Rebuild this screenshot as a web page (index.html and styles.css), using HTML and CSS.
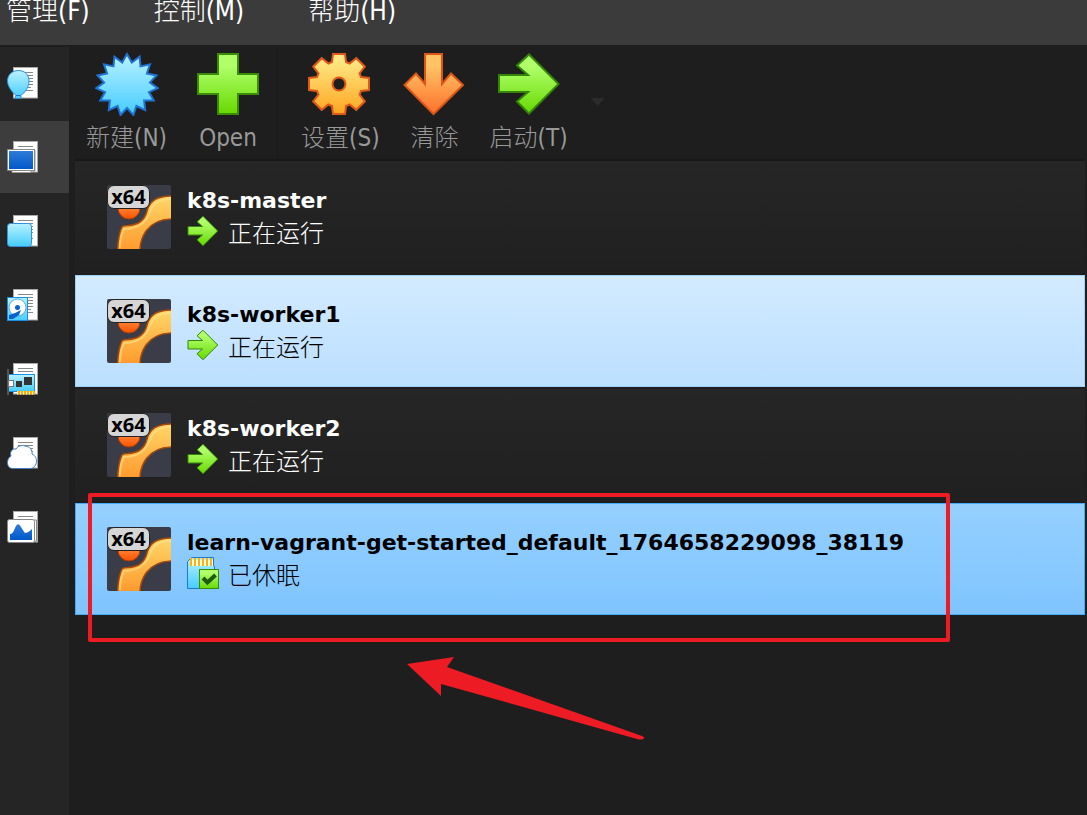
FILE: index.html
```html
<!DOCTYPE html>
<html lang="zh-CN">

<head>
  <meta charset="UTF-8">
  <meta name="viewport" content="width=device-width, initial-scale=1.0">
  <title>VirtualBox</title>
  <link rel="stylesheet" href="styles.css">
</head>

<body>
  <!-- shared icons -->
  <svg class="defs" width="0" height="0" aria-hidden="true">
    <defs>
      <linearGradient id="g-blue" x1="0" y1="0" x2="0" y2="1"><stop offset="0" stop-color="#b8f2ff"/><stop offset="1" stop-color="#46ccff"/></linearGradient>
      <linearGradient id="g-green" x1="0" y1="0" x2="0" y2="1"><stop offset="0.2" stop-color="#b0ff6a"/><stop offset="1" stop-color="#66d900"/></linearGradient>
      <linearGradient id="g-yellow" x1="0" y1="0" x2="0" y2="1"><stop offset="0.1" stop-color="#ffe885"/><stop offset="1" stop-color="#ffa51f"/></linearGradient>
      <linearGradient id="g-orange" x1="0" y1="0" x2="0" y2="1"><stop offset="0.2" stop-color="#ffc265"/><stop offset="1" stop-color="#ff702c"/></linearGradient>
      <linearGradient id="g-deep" x1="0" y1="0" x2="0" y2="1"><stop offset="0" stop-color="#2e7cd8"/><stop offset="1" stop-color="#0058c8"/></linearGradient>
      <linearGradient id="g-body" x1="0" y1="0" x2="0" y2="1"><stop offset="0" stop-color="#ffd768"/><stop offset="1" stop-color="#ff9a2e"/></linearGradient>
      <linearGradient id="g-head" x1="0" y1="0" x2="0" y2="1"><stop offset="0.4" stop-color="#ff8a3c"/><stop offset="1" stop-color="#ff5200"/></linearGradient>
    </defs>
    <symbol id="arrow" viewBox="0 0 64 64">
      <path d="M2 23H31L20 13.500L32 2.500L61.500 32L32 61.500L20 49.500L31 40H2Z" fill="url(#g-green)" stroke="#348509" stroke-width="2"/>
    </symbol>
    <symbol id="page" viewBox="0 0 32 32">
      <rect x="6.500" y="0.500" width="24" height="30.500" fill="#fff" stroke="#aaa"/>
      <path d="M11 5.500h15M11 8.500h15M11 11.500h15M11 14.500h15M11 17.500h15M11 20.500h13M11 23.500h15" stroke="#888"/>
    </symbol>
    <symbol id="vm" viewBox="0 0 64 64">
      <rect width="64" height="64" rx="2" fill="#3a3d48"/>
      <circle cx="22" cy="23" r="11" fill="url(#g-head)" stroke="#b33a00"/>
      <path d="M10.500 65C11 56 12 48 15 42C16 41 18 40.500 21 40.500C33 40 38 34 40 26C43 15 51 11 65 11V34C53 34 45 38 39 46C35 52 33 57 33 65Z" fill="url(#g-body)" stroke="#a94a0c" stroke-width="1.500"/>
      <path d="M13 63C13 56 15 48 17 44C31 44 39 38 43 27C46 17 54 14 64 14" fill="none" stroke="#ffe58c" stroke-width="2" opacity=".6"/>
    </symbol>
  </svg>

  <nav class="menubar">
    <button type="button">管理(F)</button>
    <button type="button">控制(M)</button>
    <button type="button">帮助(H)</button>
  </nav>

  <div class="window">
    <nav class="sidebar">
      <button type="button" class="tab" aria-label="欢迎">
        <svg viewBox="0 0 32 32"><use href="#page"/>
          <path d="M11.500 3.500C5 3.500.5 8 .5 14C.5 20 6 26 9 28.500L8 31.500H14.500L13.500 28.500C18 26 22 20 22 14C22 8 18 3.500 11.500 3.500Z" fill="url(#g-blue)" stroke="#2e8fe0"/>
          <path d="M9 28.500h4.500" stroke="#1679d0"/>
        </svg>
      </button>
      <button type="button" class="tab active" aria-label="虚拟电脑">
        <svg viewBox="0 0 32 32"><use href="#page"/>
          <path d="M5 29.500H24V31.500H5ZM28 9V30H24" fill="#fff" stroke="#999"/>
          <rect x="0.500" y="8.500" width="27" height="21" fill="#fff" stroke="#888"/>
          <rect x="2" y="10" width="24" height="18" fill="url(#g-deep)"/>
        </svg>
      </button>
      <button type="button" class="tab" aria-label="扩展">
        <svg viewBox="0 0 32 32"><use href="#page"/>
          <rect x="0.500" y="8.500" width="24" height="23" rx="3" fill="url(#g-blue)" stroke="#3391dc"/>
        </svg>
      </button>
      <button type="button" class="tab" aria-label="介质">
        <svg viewBox="0 0 32 32"><use href="#page"/>
          <rect x="0.500" y="8.500" width="20" height="23" fill="url(#g-blue)" stroke="#1d8de0"/>
          <circle cx="10.500" cy="18.500" r="8.500" fill="#fff" stroke="#4aaee8"/>
          <circle cx="10.500" cy="18.500" r="2.500" fill="#0b62cc"/>
          <path d="M14 21L12 26L6 30H2V26L8 24Z" fill="#0b62cc"/>
        </svg>
      </button>
      <button type="button" class="tab" aria-label="网络">
        <svg viewBox="0 0 32 32"><use href="#page"/>
          <rect x="1.500" y="11.500" width="26" height="17" fill="url(#g-blue)" stroke="#1d8de0"/>
          <path d="M1 6V32" stroke="#555" stroke-width="2"/>
          <rect x="1.500" y="17.500" width="5" height="6" fill="#fff" stroke="#777"/>
          <rect x="9" y="18" width="6" height="6" fill="#333"/>
          <rect x="17" y="14" width="8" height="8" fill="#333"/>
          <rect x="10" y="28" width="18" height="3.500" fill="#ffb000"/>
          <path d="M10 30h18" stroke="#fff" stroke-width="3" stroke-dasharray="1 2"/>
        </svg>
      </button>
      <button type="button" class="tab" aria-label="云">
        <svg viewBox="0 0 32 32"><use href="#page"/>
          <path d="M6 31.500C2 31.500.5 28.500.5 25.500C.5 22.500 2 20 4 19C2.500 15 5 11.500 9 12C11 8.500 15 8 18 9C23 9.500 25.500 13 25 17C29 19 29.500 22 29.500 24C29.500 28 27 31.500 23 31.500Z" fill="#fff" stroke="#3f7ec4"/>
        </svg>
      </button>
      <button type="button" class="tab" aria-label="资源">
        <svg viewBox="0 0 32 32"><use href="#page"/>
          <path d="M27 9H29.500V30H27" fill="#fff" stroke="#888"/>
          <rect x="0.500" y="8.500" width="27" height="23" rx="2" fill="#fff" stroke="#888"/>
          <path d="M3 29V23Q6 23 8 17Q11 10 14 16Q17 21 18 22Q21 22 25 18V29Z" fill="url(#g-deep)"/>
        </svg>
      </button>
    </nav>

    <main class="content">
      <div class="toolbar">
        <div class="group group-new">
          <button type="button" class="tool">
            <svg viewBox="0 0 64 64"><polygon points="32,2 36.800,10.500 44.600,4.700 45.500,14.400 55,12.300 51.900,21.500 61.500,23.400 54.900,30.600 62.800,36.200 53.900,40.100 58.800,48.500 49.100,48.400 50.200,58.100 41.400,54 38.400,63 32,56 25.600,63 22.600,54 13.800,58.100 14.900,48.400 5.200,48.500 10.100,40.100 1.200,36.200 9.100,30.600 2.500,23.400 12.100,21.500 9,12.300 18.500,14.400 19.400,4.700 27.200,10.500" fill="url(#g-blue)" stroke="#1f72d2" stroke-width="2"/></svg>
            <span>新建(N)</span>
          </button>
          <button type="button" class="tool">
            <svg viewBox="0 0 64 64"><path d="M22 2H42V22H62V42H42V62H22V42H2V22H22Z" fill="url(#g-green)" stroke="#3a8c06" stroke-width="2"/></svg>
            <span>Open</span>
          </button>
        </div>
        <div class="group">
          <button type="button" class="tool">
            <svg viewBox="-31 -32 64 64"><path fill-rule="evenodd" d="M-7-22L-6-30L6-30L7-22L10.600-20.500L17.300-25.800L25.800-17.300L20.500-10.600L22-7L30-6L30 6L22 7L20.500 10.600L25.800 17.300L17.300 25.800L10.600 20.500L7 22L6 30L-6 30L-7 22L-10.600 20.500L-17.300 25.800L-25.800 17.300L-20.500 10.600L-22 7L-30 6L-30-6L-22-7L-20.500-10.600L-25.800-17.300L-17.300-25.800L-10.600-20.500ZM6.500 0A6.500 6.500 0 1 0-6.500 0A6.500 6.500 0 1 0 6.500 0Z" fill="url(#g-yellow)" stroke="#e0591a" stroke-width="2"/></svg>
            <span>设置(S)</span>
          </button>
          <button type="button" class="tool">
            <svg viewBox="0 0 64 64"><path d="M22 2H39V32L48 21.500L60 33L30.500 62L1.500 33L13 21.500L22 32Z" fill="url(#g-orange)" stroke="#dc5516" stroke-width="2"/></svg>
            <span>清除</span>
          </button>
          <button type="button" class="tool">
            <svg viewBox="0 0 64 64"><use href="#arrow"/></svg>
            <span>启动(T)</span>
          </button>
          <button type="button" class="more" aria-label="更多"></button>
        </div>
      </div>

      <ul class="machines">
        <li class="machine">
          <div class="os"><svg viewBox="0 0 64 64"><use href="#vm"/></svg><b>x64</b></div>
          <div class="info">
            <h2>k8s-master</h2>
            <p><svg viewBox="0 0 64 64"><use href="#arrow"/></svg>正在运行</p>
          </div>
        </li>
        <li class="machine hover">
          <div class="os"><svg viewBox="0 0 64 64"><use href="#vm"/></svg><b>x64</b></div>
          <div class="info">
            <h2>k8s-worker1</h2>
            <p><svg viewBox="0 0 64 64"><use href="#arrow"/></svg>正在运行</p>
          </div>
        </li>
        <li class="machine">
          <div class="os"><svg viewBox="0 0 64 64"><use href="#vm"/></svg><b>x64</b></div>
          <div class="info">
            <h2>k8s-worker2</h2>
            <p><svg viewBox="0 0 64 64"><use href="#arrow"/></svg>正在运行</p>
          </div>
        </li>
        <li class="machine selected">
          <div class="os"><svg viewBox="0 0 64 64"><use href="#vm"/></svg><b>x64</b></div>
          <div class="info">
            <h2>learn-vagrant-get-started_default_1764658229098_38119</h2>
            <p>
              <svg viewBox="0 0 32 32">
                <path d="M4.500.5H26.500V8L27.500 10V31.500H.5V4.500Z" fill="url(#g-blue)" stroke="#1d78d0"/>
                <path d="M3 3H26V9H3Z" fill="#fff"/>
                <path d="M3 5H26" stroke="#ffb400" stroke-width="8" stroke-dasharray="2 2"/>
                <rect x="12.500" y="12.500" width="19" height="19" fill="url(#g-green)" stroke="#3c8a0c"/>
                <path d="M16 21L20.500 25.500L28.500 18" fill="none" stroke="#1e5c0a" stroke-width="4"/>
              </svg>已休眠</p>
          </div>
          <!-- red marker and pointer -->
          <div class="marker"></div>
          <svg class="pointer" viewBox="0 0 240 84"><path d="M0 7L47 0L40 10L235 79Q239 81 236 82Q234 83 230 82L34 27V39Z" fill="#ed1c24"/></svg>
        </li>
      </ul>
    </main>
  </div>
</body>

</html>
```
FILE: styles.css
```css
* {
  box-sizing: border-box;
}

body {
  margin: 0;
  min-height: 100vh;
  display: flex;
  flex-direction: column;
  background: #1e1e1e;
  color: #fff;
  font-family: "DejaVu Sans Condensed", "Noto Sans CJK SC", sans-serif;
  font-size: 24px;
  font-weight: 300;
  overflow-x: hidden;
}

button {
  padding: 0;
  border: none;
  background: none;
  color: inherit;
  font: inherit;
}

svg {
  display: block;
}

.defs {
  position: absolute;
}

.menubar {
  display: flex;
  align-items: flex-start;
  gap: 64px;
  height: 45px;
  padding-left: 6px;
  background: #3b3b3b;
  font-size: 26px;
}

.menubar button {
  line-height: 22px;
}

.window {
  flex: 1;
  display: flex;
}

.sidebar {
  display: flex;
  flex-direction: column;
  gap: 2px;
  width: 69px;
  margin-top: 2px;
  background: #252525;
}

.tab {
  height: 72px;
  padding-left: 7px;
}

.tab svg {
  width: 32px;
  height: 32px;
}

.tab.active {
  background: #3d3d3d;
}

.content {
  flex: 1;
  min-width: 0;
  padding: 0 2px 0 6px;
}

/* toolbar */
.toolbar {
  display: flex;
  height: 116px;
  padding: 7px 0 0 11px;
  border-bottom: 2px solid #181818;
}

.group {
  display: flex;
  align-items: flex-start;
  gap: 23px;
}

.group-new {
  gap: 29px;
  margin-right: 23px;
  padding-right: 17px;
  border-right: 1px solid #191919;
}

.tool {
  display: flex;
  flex-direction: column;
  align-items: center;
  min-width: 64px;
  color: #999;
  line-height: 44px;
}

.tool svg {
  width: 64px;
  height: 64px;
}

.more {
  width: 14px;
  height: 8px;
  margin-top: 46px;
  background: #2c2c2c;
  clip-path: polygon(0 0, 100% 0, 50% 100%);
}

/* machine list */
.machines {
  display: flex;
  flex-direction: column;
  gap: 2px;
  margin: 0;
  padding: 0;
  list-style: none;
}

.machine {
  position: relative;
  display: flex;
  gap: 16px;
  padding: 24px 32px;
  background: linear-gradient(#262626, #202020);
}

.machine.hover {
  background: linear-gradient(#d3ebff, #bbdfff);
  box-shadow: inset 0 0 0 1px #9bd0fb;
  color: #000;
}

.machine.selected {
  background: linear-gradient(#95d0ff, #7fc4ff);
  box-shadow: inset 0 0 0 1px #45aaf8;
  color: #000;
}

.os {
  position: relative;
  width: 64px;
  height: 64px;
}

.os b {
  position: absolute;
  top: 0;
  left: 0;
  width: 43px;
  border: 1px solid #222;
  border-radius: 7px;
  background: #d6d6d6;
  color: #000;
  font: bold 20px/22px "Noto Sans", sans-serif;
  text-align: center;
}

.info h2,
.info p {
  display: flex;
  align-items: center;
  gap: 9px;
  height: 32px;
  margin: 0;
  white-space: nowrap;
}

.info h2 {
  font: bold 22px/32px "DejaVu Sans", sans-serif;
}

.info p {
  height: 28px;
}

.info p svg {
  width: 32px;
  height: 32px;
}

/* annotation */
.marker {
  position: absolute;
  top: -10px;
  right: 135px;
  bottom: -27px;
  left: 13px;
  border: 4px solid #ed1c24;
  border-radius: 2px;
}

.pointer {
  position: absolute;
  top: 154px;
  left: 332px;
  width: 240px;
  height: 84px;
}
```
